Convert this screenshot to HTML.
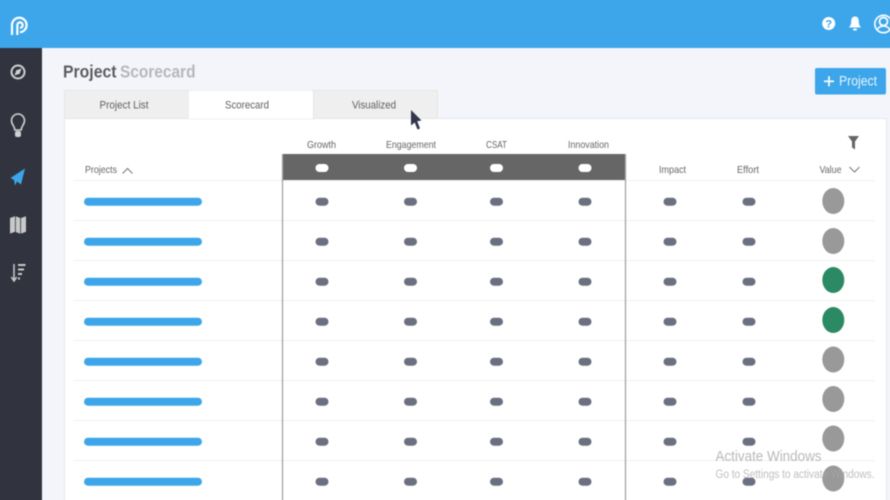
<!DOCTYPE html>
<html lang="en">
<head>
<meta charset="utf-8">
<title>Project Scorecard</title>
<style>
html,body{margin:0;padding:0;width:890px;height:500px;overflow:hidden;background:#f3f5fb}
#w{position:relative;width:890px;height:500px;overflow:hidden;contain:strict}
svg{position:absolute;left:-6px;top:-6px;display:block;filter:blur(.4px)}
text{font-family:"Liberation Sans",sans-serif}
.h{font-size:10.5px;fill:#666}
.t{font-size:11px;fill:#5f5f5f}
</style>
</head>
<body>
<div id="w">
<svg width="902" height="512" viewBox="-6 -6 902 512" xmlns="http://www.w3.org/2000/svg">
<rect x="-6" y="-6" width="902" height="512" fill="#f3f5fb"/>
<!-- sidebar -->
<rect x="-6" y="48" width="48" height="458" fill="#31343f"/>
<!-- top bar -->
<rect x="-6" y="-6" width="902" height="54" fill="#3da6ea"/>
<!-- logo -->
<path d="M12 35V24.500a7.300 7.300 0 1 1 8 7.800" fill="none" stroke="#fff" stroke-width="2.200"/>
<path d="M17.300 35V25a2.700 2.700 0 1 1 2.700 2.800" fill="none" stroke="#fff" stroke-width="2.200"/>
<!-- top right icons -->
<circle cx="828.700" cy="23.500" r="6.500" fill="#fff"/>
<text x="828.700" y="27.500" font-size="11" font-weight="700" fill="#3da6ea" text-anchor="middle">?</text>
<path d="M855 16.500c-3 0-3.800 2.500-3.800 5 0 3-1 4.500-2.200 6h12c-1.200-1.500-2.200-3-2.200-6 0-2.500-.8-5-3.800-5z" fill="#fff"/>
<rect x="853" y="28.500" width="4" height="2" rx="1" fill="#fff"/>
<circle cx="883.500" cy="24" r="8.700" fill="none" stroke="#fff" stroke-width="1.600"/>
<circle cx="883.500" cy="21.500" r="4" fill="none" stroke="#fff" stroke-width="1.800"/>
<path d="M877 30c1.500-3 4-4 6.500-4s5 1 6.500 4" fill="none" stroke="#fff" stroke-width="1.500"/>
<!-- sidebar icons -->
<circle cx="18" cy="72" r="6.500" fill="none" stroke="#d0d0d0" stroke-width="2"/>
<path d="M21.500 68.500l-1.800 5.200-5.200 1.800 1.800-5.200z" fill="#d0d0d0"/>
<path d="M14.800 130c0-4-3.300-5-3.300-9.500a6.500 6.500 0 0 1 13 0c0 4.500-3.300 5.500-3.300 9.500z" fill="none" stroke="#d0d0d0" stroke-width="1.600"/>
<rect x="15" y="131" width="6" height="6" rx="2" fill="#d0d0d0"/>
<path d="M25 168.500l-4 16-4-3-2 4-1-5.500-3.500-2z" fill="#3da6ea"/>
<path d="M10 218l5-1.800v15.600l-5 1.800zM15.800 216.200l4.400 1.800v15.800l-4.400-1.800zM21 218l5-1.800v15.600l-5 1.800z" fill="#c9c9c9"/>
<path d="M14 264v16M11.300 277l2.700 4 2.700-4" fill="none" stroke="#c9c9c9" stroke-width="1.500"/>
<path d="M18 265h7.500M18 269.500h6M18 274h4M18 278.500h2" stroke="#c9c9c9" stroke-width="1.900"/>
<!-- title -->
<text x="63" y="77.500" font-size="17.500" font-weight="700" fill="#5d5d5d" textLength="53.500" lengthAdjust="spacingAndGlyphs">Project</text>
<text x="120" y="77.500" font-size="17.500" font-weight="700" fill="#b7b7b9" textLength="75.500" lengthAdjust="spacingAndGlyphs">Scorecard</text>
<!-- button -->
<rect x="815" y="68" width="71" height="26.500" rx="2" fill="#3da6ea"/>
<path d="M824 81.300h10M829 76.300v10" stroke="#fff" stroke-width="1.700"/>
<text x="839" y="85.500" font-size="13.500" fill="#eaf5fd" textLength="38" lengthAdjust="spacingAndGlyphs">Project</text>
<!-- card -->
<rect x="64.500" y="118.500" width="822" height="390" fill="#fff" stroke="#e6e7ec"/>
<!-- tabs -->
<rect x="64.500" y="90.500" width="124" height="28" fill="#efefef" stroke="#e6e6e6"/>
<rect x="188.500" y="90.500" width="125" height="28.500" fill="#fff" stroke="#efefef"/>
<rect x="313.500" y="90.500" width="124" height="28" fill="#efefef" stroke="#e6e6e6"/>
<text x="99.500" y="108.500" class="t" textLength="49" lengthAdjust="spacingAndGlyphs">Project List</text>
<text x="225" y="108.500" class="t" textLength="44" lengthAdjust="spacingAndGlyphs">Scorecard</text>
<text x="352" y="108.500" class="t" textLength="44" lengthAdjust="spacingAndGlyphs">Visualized</text>
<!-- headers -->
<text x="307" y="148" class="h" textLength="29" lengthAdjust="spacingAndGlyphs">Growth</text>
<text x="386" y="148" class="h" textLength="50" lengthAdjust="spacingAndGlyphs">Engagement</text>
<text x="486" y="148" class="h" textLength="21" lengthAdjust="spacingAndGlyphs">CSAT</text>
<text x="568" y="148" class="h" textLength="41" lengthAdjust="spacingAndGlyphs">Innovation</text>
<text x="85" y="173" class="h" textLength="32" lengthAdjust="spacingAndGlyphs">Projects</text>
<path d="M122.500 173.500l5-5 5 5" fill="none" stroke="#777" stroke-width="1"/>
<text x="659" y="173" class="h" textLength="27" lengthAdjust="spacingAndGlyphs">Impact</text>
<text x="737" y="173" class="h" textLength="22" lengthAdjust="spacingAndGlyphs">Effort</text>
<text x="819.500" y="173" class="h" textLength="22" lengthAdjust="spacingAndGlyphs">Value</text>
<path d="M849.500 167l5 5 5-5" fill="none" stroke="#777" stroke-width="1"/>
<path d="M848 136h11l-4 5.500v8l-3-2v-6z" fill="#666"/>
<!-- row lines -->
<g stroke="#eeeff2" stroke-width="1">
<path d="M73 180.500H875M73 220.500H875M73 260.500H875M73 300.500H875M73 340.500H875M73 380.500H875M73 420.500H875M73 460.500H875"/>
</g>
<!-- highlighted column box -->
<rect x="282" y="154" width="344" height="26" fill="#666"/>
<path d="M282.500 154V506M625.500 154V506" stroke="#a3a3a3" stroke-width="1.300"/>
<g fill="#fff">
<rect x="315.500" y="164" width="13" height="8" rx="4"/>
<rect x="404" y="164" width="13" height="8" rx="4"/>
<rect x="490" y="164" width="13" height="8" rx="4"/>
<rect x="578.500" y="164" width="13" height="8" rx="4"/>
</g>
<!-- blue bars -->
<g fill="#3da6ea">
<rect x="84" y="197.700" width="118" height="8" rx="4"/>
<rect x="84" y="237.700" width="118" height="8" rx="4"/>
<rect x="84" y="277.700" width="118" height="8" rx="4"/>
<rect x="84" y="317.700" width="118" height="8" rx="4"/>
<rect x="84" y="357.700" width="118" height="8" rx="4"/>
<rect x="84" y="397.700" width="118" height="8" rx="4"/>
<rect x="84" y="437.700" width="118" height="8" rx="4"/>
<rect x="84" y="477.700" width="118" height="8" rx="4"/>
</g>
<!-- pills -->
<defs>
<g id="r" fill="#6b7080">
<rect x="315.500" y="0" width="13" height="8" rx="4"/>
<rect x="404" y="0" width="13" height="8" rx="4"/>
<rect x="490" y="0" width="13" height="8" rx="4"/>
<rect x="578.500" y="0" width="13" height="8" rx="4"/>
<rect x="663.500" y="0" width="13" height="8" rx="4"/>
<rect x="742.500" y="0" width="13" height="8" rx="4"/>
</g>
</defs>
<use href="#r" y="197.700"/>
<use href="#r" y="237.700"/>
<use href="#r" y="277.700"/>
<use href="#r" y="317.700"/>
<use href="#r" y="357.700"/>
<use href="#r" y="397.700"/>
<use href="#r" y="437.700"/>
<use href="#r" y="477.700"/>
<!-- value circles -->
<ellipse cx="833.300" cy="201" rx="11" ry="13" fill="#999"/>
<ellipse cx="833.300" cy="241" rx="11" ry="13" fill="#999"/>
<ellipse cx="833.300" cy="280" rx="11" ry="13" fill="#2b8a63"/>
<ellipse cx="833.300" cy="320" rx="11" ry="13" fill="#2b8a63"/>
<ellipse cx="833.300" cy="359.500" rx="11" ry="13" fill="#999"/>
<ellipse cx="833.300" cy="399" rx="11" ry="13" fill="#999"/>
<ellipse cx="833.300" cy="438.500" rx="11" ry="13" fill="#999"/>
<ellipse cx="833.300" cy="478.500" rx="11" ry="13" fill="#999"/>
<!-- cursor -->
<path d="M411 110l10.500 10.500-4.300.8 2.800 7.200-2.500 1-2.800-7-3.700 3z" fill="#31364a"/>
<!-- watermark -->
<text x="715.500" y="461" font-size="15" fill="#a8a8a8" fill-opacity=".8" textLength="106" lengthAdjust="spacingAndGlyphs">Activate Windows</text>
<text x="715.500" y="478" font-size="11.500" fill="#a8a8a8" fill-opacity=".75" textLength="159" lengthAdjust="spacingAndGlyphs">Go to Settings to activate Windows.</text>
</svg>
</div>
</body>
</html>
